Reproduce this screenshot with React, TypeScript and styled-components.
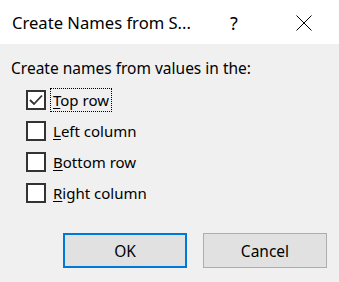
import React from "react";
import styled, { createGlobalStyle } from "styled-components";

const Global = createGlobalStyle`
  html, body { margin: 0; padding: 0; }
  body {
    width: 339px;
    height: 282px;
    overflow: hidden;
    background: #f0f0f0;
    font-family: "Noto Sans", "Open Sans", sans-serif;
    color: #000;
  }
`;

const Dialog = styled.div`
  width: 339px;
  height: 282px;
  display: flex;
  flex-direction: column;
  background: #f0f0f0;
`;

const TitleBar = styled.div`
  height: 44px;
  flex: none;
  display: flex;
  align-items: center;
  background: #ffffff;
  padding: 0 23px 0 12px;
`;

const Title = styled.div`
  flex: 1;
  font-size: 16.6px;
  line-height: 20px;
  padding-top: 2px;
  color: #000;
  white-space: nowrap;
`;

const HelpButton = styled.div`
  width: 24px;
  text-align: center;
  font-size: 18px;
  line-height: 20px;
  padding-top: 1px;
  color: #000;
`;

const CloseButton = styled.div`
  width: 24px;
  height: 20px;
  margin-left: 46px;
  display: flex;
  align-items: center;
  justify-content: center;
  padding-top: 1px;
`;

const Body = styled.div`
  flex: 1;
  display: flex;
  flex-direction: column;
  padding: 14px 12px 0 11px;
`;

const GroupLabel = styled.div`
  font-size: 15.5px;
  line-height: 20px;
  white-space: nowrap;
`;

const CheckList = styled.div`
  display: flex;
  flex-direction: column;
  gap: 11px;
  margin: 12px 0 0 15px;
`;

const Row = styled.label`
  display: flex;
  align-items: center;
  gap: 4px;
  height: 20px;
  font-size: 15px;
`;

const Box = styled.span`
  width: 20px;
  height: 20px;
  box-sizing: border-box;
  border: 2px solid #333333;
  background: #ffffff;
  display: flex;
  align-items: center;
  justify-content: center;
  flex: none;
`;

const LabelText = styled.span<{ $focus?: boolean }>`
  padding: 1px 2px;
  line-height: 20px;
  border: 1px dotted ${(p) => (p.$focus ? "#000" : "transparent")};
  white-space: nowrap;
`;

const Key = styled.span`
  text-decoration: underline;
  text-underline-offset: 2px;
`;

const Footer = styled.div`
  display: flex;
  justify-content: flex-end;
  gap: 16px;
  margin-top: auto;
  margin-bottom: 14px;
`;

const Button = styled.button<{ $primary?: boolean }>`
  width: 124px;
  height: 35px;
  box-sizing: border-box;
  background: #e1e1e1;
  border: ${(p) => (p.$primary ? "2px solid #0078d7" : "1px solid #adadad")};
  font-family: "Noto Sans", "Open Sans", sans-serif;
  font-size: 15.5px;
  color: #000;
  padding: 0;
  margin: 0;
`;

const items: { key: string; rest: string; checked?: boolean }[] = [
  { key: "T", rest: "op row", checked: true },
  { key: "L", rest: "eft column" },
  { key: "B", rest: "ottom row" },
  { key: "R", rest: "ight column" },
];

export default function App() {
  return (
    <>
      <Global />
      <Dialog>
        <TitleBar>
          <Title>Create Names from S...</Title>
          <HelpButton>?</HelpButton>
          <CloseButton>
            <svg width="16" height="16" viewBox="0 0 16 16">
              <path d="M0.5 0.5 L15.5 15.5 M15.5 0.5 L0.5 15.5" stroke="#000" strokeWidth="1" fill="none" />
            </svg>
          </CloseButton>
        </TitleBar>
        <Body>
          <GroupLabel>Create names from values in the:</GroupLabel>
          <CheckList>
            {items.map((it, i) => (
              <Row key={i}>
                <Box>
                  {it.checked && (
                    <svg width="16" height="16" viewBox="0 0 16 16">
                      <path d="M2 8 L6 12 L14 3.5" stroke="#333" strokeWidth="1.8" fill="none" />
                    </svg>
                  )}
                </Box>
                <LabelText $focus={i === 0}>
                  <Key>{it.key}</Key>
                  {it.rest}
                </LabelText>
              </Row>
            ))}
          </CheckList>
          <Footer>
            <Button $primary>OK</Button>
            <Button>Cancel</Button>
          </Footer>
        </Body>
      </Dialog>
    </>
  );
}
